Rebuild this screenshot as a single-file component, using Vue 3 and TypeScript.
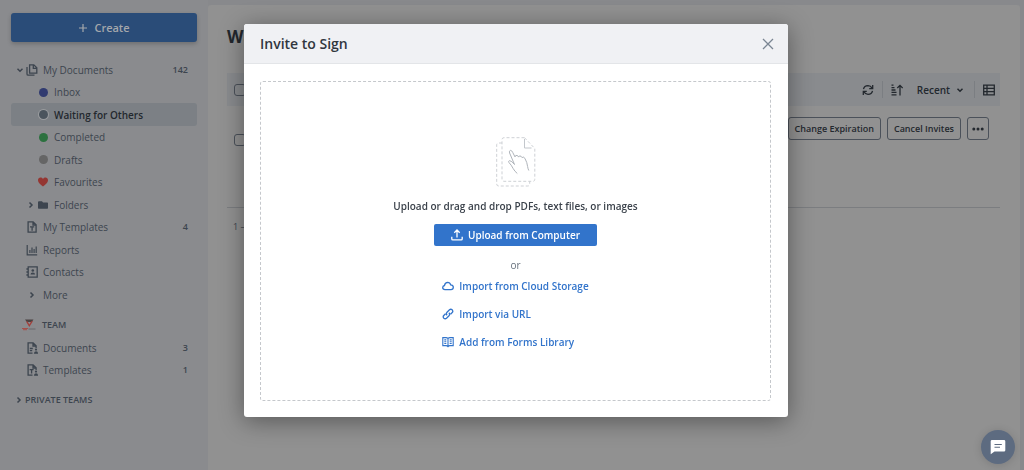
<script setup lang="ts">
import { ref } from 'vue'

interface NavItem {
  label: string
  kind: 'root' | 'child'
  icon?: string
  dot?: string
  chevron?: 'down' | 'right'
  count?: number
  active?: boolean
}

const navItems: NavItem[] = [
  { label: 'My Documents', kind: 'root', icon: 'copies', chevron: 'down', count: 142 },
  { label: 'Inbox', kind: 'child', dot: 'inbox' },
  { label: 'Waiting for Others', kind: 'child', dot: 'waiting', active: true },
  { label: 'Completed', kind: 'child', dot: 'completed' },
  { label: 'Drafts', kind: 'child', dot: 'drafts' },
  { label: 'Favourites', kind: 'child', icon: 'heart' },
  { label: 'Folders', kind: 'child', icon: 'folder', chevron: 'right' },
  { label: 'My Templates', kind: 'root', icon: 'template', count: 4 },
  { label: 'Reports', kind: 'root', icon: 'chart' },
  { label: 'Contacts', kind: 'root', icon: 'contacts' },
  { label: 'More', kind: 'root', icon: 'chevron-right' },
]

const teamItems: NavItem[] = [
  { label: 'Documents', kind: 'root', icon: 'team-doc', count: 3 },
  { label: 'Templates', kind: 'root', icon: 'team-template', count: 1 },
]

const importLinks = [
  { label: 'Import from Cloud Storage', icon: 'cloud' },
  { label: 'Import via URL', icon: 'link' },
  { label: 'Add from Forms Library', icon: 'book' },
]

const open = ref(true)
</script>

<template>
  <svg class="sprite" aria-hidden="true">
    <symbol id="chevron-right" viewBox="0 0 12 12"><path d="M4.5 3.5 7 6 4.5 8.5" fill="none" stroke="currentColor" stroke-width="1.5" /></symbol>
    <symbol id="chevron-down" viewBox="0 0 12 12"><path d="M3.5 4.8 6 7.2 8.500 4.8" fill="none" stroke="currentColor" stroke-width="1.5" /></symbol>
    <symbol id="copies" viewBox="0 0 12 12"><path d="M3.600.8h4.200l3 3v5.400H3.600zM7.300 1v3.300h3.300M1 3v7q0 1.200 1.200 1.200H8.500" fill="none" stroke="currentColor" stroke-width="1.300" /></symbol>
    <symbol id="heart" viewBox="0 0 12 12"><path d="M6 10.500C3.400 8.500 1 6.400 1 4.200 1 1.200 4.400.7 6 2.900 7.600.7 11 1.200 11 4.200c0 2.200-2.400 4.300-5 6.300z" fill="currentColor" /></symbol>
    <symbol id="folder" viewBox="0 0 12 12"><path d="M2 2.300h3l1 1.200h4.300q.7 0 .7.700v4.800q0 .7-.7.700H1.700Q1 9.700 1 9V3.300q0-1 1-1z" fill="currentColor" /></symbol>
    <symbol id="template" viewBox="0 0 12 12"><path d="M2.100.8h5l3 3v7.400h-8zM7 1v3h3" fill="none" stroke="currentColor" stroke-width="1.300" /><path d="M4 5.800h4.200M6.100 5.800v4" stroke="currentColor" stroke-width="1.300" /></symbol>
    <symbol id="chart" viewBox="0 0 12 12"><path d="M1.200 1v9.900h10M3.900 9V6M6 9V3.500M8.100 9V5M10.200 9V2.500" fill="none" stroke="currentColor" stroke-width="1.200" /></symbol>
    <symbol id="contacts" viewBox="0 0 12 12"><path d="M2.200.9h9v10.200h-9zM.4 3h2.400M.4 6h2.400M.4 9h2.400" fill="none" stroke="currentColor" stroke-width="1.300" /><circle cx="6.800" cy="4.500" r="1.300" fill="currentColor" /><path d="M4.500 8.600q0-2 2.300-2t2.300 2z" fill="currentColor" /></symbol>
    <symbol id="team-doc" viewBox="0 0 12 12"><path d="M6.500 11.200H2.100V.8h5l3 3V6M7 1v3h3M3.800 6.500h3M3.800 8.600h2.400" fill="none" stroke="currentColor" stroke-width="1.300" /><circle cx="10" cy="7.600" r="1.100" fill="currentColor" /><path d="M7.900 11.700q0-2.500 2.100-2.500t2 2.500z" fill="currentColor" /></symbol>
    <symbol id="team-template" viewBox="0 0 12 12"><path d="M6.500 11.200H2.100V.8h5l3 3V6M7 1v3h3M3.600 5.700h4M5.600 5.700v3.800" fill="none" stroke="currentColor" stroke-width="1.300" /><circle cx="10" cy="7.600" r="1.100" fill="currentColor" /><path d="M7.900 11.700q0-2.500 2.100-2.500t2 2.500z" fill="currentColor" /></symbol>
    <symbol id="cloud" viewBox="0 0 12 12"><path d="M3 9.600q-2.300 0-2.300-2 0-1.700 1.800-2.100Q3 2.500 5.700 2.400q2.300 0 3 2.500 2.600.3 2.600 2.400 0 2.300-2.300 2.300z" fill="none" stroke="currentColor" stroke-width="1.300" /></symbol>
    <symbol id="link" viewBox="0 0 12 12"><path d="M5.100 7.300Q3.700 5.700 5 4.300l2.500-2.500q1.300-1.200 2.700 0 1.200 1.400 0 2.700L8.500 6.200M6.900 4.700q1.400 1.600.1 3l-2.500 2.500q-1.300 1.200-2.700 0-1.200-1.400 0-2.700l1.700-1.700" fill="none" stroke="currentColor" stroke-width="1.300" /></symbol>
    <symbol id="book" viewBox="0 0 12 12"><path d="M6 2.500Q5.300 1.600 4 1.600H.8v8H4q1.300 0 2 1 .7-1 2-1h3.200v-8H8q-1.300 0-2 .9zM6 2.500v8M2.300 3.900h2M2.300 5.700h2M2.300 7.500h2M7.700 3.900h2M7.700 5.700h2M7.700 7.500h2" fill="none" stroke="currentColor" stroke-width="1.100" /></symbol>
  </svg>

  <div class="app">
    <nav class="sidebar" aria-label="Main">
      <button class="create" type="button">
        <svg viewBox="0 0 10 10" aria-hidden="true"><path d="M5 1v8M1 5h8" stroke="currentColor" stroke-width="1.200" /></svg>
        Create
      </button>
      <ul class="nav">
        <li v-for="item in navItems" :key="item.label" :class="[item.kind, { active: item.active }]">
          <a href="#">
            <span class="toggle"><svg v-if="item.chevron"><use :href="'#chevron-' + item.chevron" /></svg></span>
            <span v-if="item.dot" class="icon"><i class="dot" :class="item.dot"></i></span>
            <svg v-else class="icon" :class="item.icon"><use :href="'#' + item.icon" /></svg>
            <span class="label">{{ item.label }}</span>
            <span v-if="item.count" class="count">{{ item.count }}</span>
          </a>
        </li>
      </ul>
      <h2 class="team">
        <svg viewBox="0 0 14 12" aria-hidden="true">
          <path d="M3 .5h8.500L9.700 3H4.800z" fill="#4b4342" />
          <path d="M4 2.500 7.300 8l3.700-6-2 .5-1.700 3-1.600-3z" fill="#a33f3b" />
          <path d="M0 9.500h6M1 10.700h4" stroke="#a5504b" />
          <path d="M6.500 10h7" stroke="#68696c" />
        </svg>
        TEAM
      </h2>
      <ul class="nav team-nav">
        <li v-for="item in teamItems" :key="item.label" :class="item.kind">
          <a href="#">
            <span class="toggle"></span>
            <svg class="icon"><use :href="'#' + item.icon" /></svg>
            <span class="label">{{ item.label }}</span>
            <span class="count">{{ item.count }}</span>
          </a>
        </li>
      </ul>
      <h2 class="private"><svg aria-hidden="true"><use href="#chevron-right" /></svg>PRIVATE TEAMS</h2>
    </nav>

    <main class="content">
      <h1>Waiting for Others</h1>
      <div class="toolbar">
        <input type="checkbox" aria-label="Select all" />
        <div class="tools">
          <button type="button" aria-label="Refresh">
            <svg viewBox="0 0 12 12"><path d="M1.500 5.200Q2.200 1.800 6 1.700q2.600 0 4.300 2.600M10.700 1v3.600H7.200M10.500 6.800Q9.800 10.200 6 10.300q-2.600 0-4.300-2.600M1.300 11V7.400h3.500" fill="none" stroke="currentColor" stroke-width="1.300" /></svg>
          </button>
          <i class="rule"></i>
          <button type="button" aria-label="Sort direction">
            <svg viewBox="0 0 12 12"><path d="M.5 1.200h2M.5 3.600h3M.5 6h4M.5 8.400h5M.5 10.800h5M9 11.500V1.500M6.300 4 9 1.300 11.700 4" fill="none" stroke="currentColor" stroke-width="1.300" /></svg>
          </button>
          <button class="recent" type="button">Recent <svg><use href="#chevron-down" /></svg></button>
          <i class="rule"></i>
          <button type="button" aria-label="Table view">
            <svg viewBox="0 0 12 12"><path d="M.7 1.200h10.600v9.600H.7zM.7 4.400h10.600M.7 7.600h10.600M4 1.200v9.600" fill="none" stroke="currentColor" stroke-width="1.300" /></svg>
          </button>
        </div>
      </div>
      <div class="row">
        <input type="checkbox" aria-label="Select document" />
        <div class="actions">
          <button type="button">Change Expiration</button>
          <button type="button">Cancel Invites</button>
          <button class="more" type="button" aria-label="More actions">
            <svg viewBox="0 0 12 12"><circle cx="1.800" cy="6" r="1.500" /><circle cx="6" cy="6" r="1.500" /><circle cx="10.200" cy="6" r="1.500" /></svg>
          </button>
        </div>
      </div>
      <p class="pages">1 –</p>
    </main>
  </div>

  <div v-if="open" class="overlay">
    <section class="dialog" role="dialog" aria-modal="true" aria-labelledby="dialog-title">
      <header>
        <h2 id="dialog-title">Invite to Sign</h2>
        <button type="button" aria-label="Close" @click="open = false">
          <svg viewBox="0 0 12 12"><path d="m1 1 10 10M11 1 1 11" stroke="currentColor" stroke-width="1.300" /></svg>
        </button>
      </header>
      <div class="dropzone">
        <svg class="pages-art" viewBox="0 0 40 50" aria-hidden="true">
          <g fill="none" stroke="#ced1d5" stroke-width="1" stroke-dasharray="3 2">
            <path d="M28.500.7H8Q6 .7 6 2.700v39.600q0 2 2 2h28.800q2 0 2-2V11.500M28.500.7l10.300 10.800M6 6H2.700Q.7 6 .7 8v39q0 2 2 2h29q2 0 2-2v-2.700" />
          </g>
          <path d="M28.500 2v9h7" fill="none" stroke="#c3c7cc" />
          <path d="M21.300 36.500q-2.500-2-4.300-5.200-1.600-3.300-4-5.700-1-1.600.5-2 2.200.2 5 3.900L13.600 16q-.7-2.300.8-2.600 1.300-.2 2.300 2l2.300 4.500q.3-2.300 2.600-1.300l1 1.500q.5-2 2.500-.8l1 1.400q.8-1.800 2.800.6 2.400 4.500 2.700 8.200.4 2.500 1.200 4" fill="none" stroke="#afb4ba" stroke-width="1" />
        </svg>
        <p class="prompt">Upload or drag and drop PDFs, text files, or images</p>
        <button class="upload" type="button">
          <svg viewBox="0 0 12 12" aria-hidden="true"><path d="M6 8.500V1.200M3.300 3.700 6 1l2.700 2.700M.8 7.700v2.200q0 1 1 1h8.400q1 0 1-1V7.700" fill="none" stroke="currentColor" stroke-width="1.300" /></svg>
          Upload from Computer
        </button>
        <p class="or">or</p>
        <ul class="imports">
          <li v-for="item in importLinks" :key="item.label">
            <a href="#"><svg aria-hidden="true"><use :href="'#' + item.icon" /></svg>{{ item.label }}</a>
          </li>
        </ul>
      </div>
    </section>
  </div>

  <button class="chat" type="button" aria-label="Open chat">
    <svg viewBox="0 0 16 16"><path d="M2 1h12q1.300 0 1.300 1.300v8.900q0 1.300-1.300 1.300H4.500L.7 15.300v-13Q.7 1 2 1z" fill="#fff" /><path d="M4.500 5.500h7.300M4.500 8.200h5.500" stroke="#5d6b80" stroke-width="1.100" /></svg>
  </button>
</template>

<style>
body {
  margin: 0;
  background: #88898c;
}
</style>

<style scoped>
* {
  box-sizing: border-box;
}
.sprite {
  position: absolute;
  width: 0;
  height: 0;
}
.app,
.overlay {
  font: 10px/16px "Open Sans", "Noto Sans", sans-serif;
}
.app {
  display: grid;
  grid-template-columns: 208px 1fr;
  min-height: 100vh;
  padding-right: 4px;
  color: #3d454f;
}
h1,
h2,
p,
ul {
  margin: 0;
  padding: 0;
}
ul {
  list-style: none;
}
button {
  font: inherit;
  font-weight: 600;
  color: inherit;
  padding: 0;
  border: 0;
  background: none;
}
a {
  color: inherit;
  text-decoration: none;
}
svg {
  display: block;
  flex: none;
  width: 12px;
  height: 12px;
}
.sidebar {
  padding: 13px 11px 0;
  background: #8a8b8e;
}
.create {
  display: flex;
  align-items: center;
  justify-content: center;
  gap: 6px;
  width: 100%;
  height: 29px;
  margin-bottom: 16px;
  border-radius: 3px;
  font-size: 11px;
  color: #a5a8ac;
  background: #2a4c78;
  box-shadow: 0 2px 4px rgba(0, 0, 0, 0.2);
}
.create svg {
  width: 10px;
  height: 10px;
}
.nav {
  display: grid;
  grid-auto-rows: 23px 22px;
}
.nav a {
  display: flex;
  align-items: center;
  height: 100%;
  padding: 0 9px 0 3px;
  border-radius: 3px;
}
.child a {
  padding-left: 14px;
}
.toggle {
  width: 12px;
}
.icon {
  display: grid;
  place-items: center;
  width: 12px;
  height: 12px;
}
.label {
  flex: 1;
  margin-left: 5px;
}
.count {
  font-size: 9px;
  font-weight: 600;
}
.active a {
  font-weight: 600;
  color: #23282e;
  background: #7c8085;
}
.dot {
  width: 9px;
  height: 9px;
  border-radius: 50%;
}
.inbox {
  background: #313b70;
}
.waiting {
  background: #4b545d;
  box-shadow: 0 0 0 1px #999b9e;
}
.completed {
  background: #2c713f;
}
.drafts {
  background: #656565;
}
.heart {
  color: #943632;
}
.team,
.private {
  display: flex;
  align-items: center;
  height: 22px;
  font-size: 9px;
  font-weight: 600;
}
.team {
  gap: 6px;
  margin-top: 8px;
  padding-left: 11px;
}
.team svg {
  width: 14px;
}
.private {
  margin-top: 8px;
  padding-left: 2px;
}
.content {
  margin-top: 5px;
  padding: 20px 20px 0 19px;
  border-radius: 3px 3px 0 0;
  background: #919191;
}
h1 {
  font-size: 17px;
  line-height: 24px;
  color: #22272d;
}
.toolbar {
  display: flex;
  align-items: center;
  justify-content: space-between;
  height: 33px;
  margin-top: 24px;
  padding: 0 5px 0 7px;
  color: #23282e;
  background: #898b8e;
}
input {
  appearance: none;
  width: 12px;
  height: 12px;
  margin: 0;
  border: 1px solid #4b515a;
  border-radius: 3px;
}
.tools,
.actions,
.recent {
  display: flex;
  align-items: center;
}
.tools {
  gap: 8px;
}
.rule {
  width: 1px;
  height: 17px;
  background: #7b7e82;
}
.recent {
  gap: 4px;
  margin-left: 6px;
}
.row {
  display: flex;
  align-items: center;
  justify-content: space-between;
  height: 102px;
  padding: 0 11px 34px 7px;
  border-bottom: 1px solid #7b7d80;
}
.actions {
  align-self: flex-start;
  gap: 6px;
  margin-top: 11px;
  color: #23282e;
}
.actions button {
  height: 23px;
  padding: 0 6px;
  border: 1px solid #4b515a;
  border-radius: 3px;
  font-size: 9px;
}
.actions .more {
  padding: 0 4px;
}
.more svg {
  fill: currentColor;
}
.pages {
  padding: 11px 6px;
  font-size: 9px;
}
.overlay {
  position: fixed;
  inset: 0;
  padding: 24px 236px 0 244px;
  display: grid;
  place-items: start center;
}
.dialog {
  width: 100%;
  max-width: 545px;
  min-width: 420px;
  overflow: hidden;
  border-radius: 3px;
  background: #fff;
  box-shadow: 0 4px 24px rgba(0, 0, 0, 0.4);
}
.dialog header {
  display: flex;
  align-items: center;
  justify-content: space-between;
  height: 40px;
  padding: 0 14px 0 16px;
  border-bottom: 1px solid #e3e5e8;
  background: #f0f1f4;
}
.dialog h2 {
  font-size: 14px;
  line-height: 20px;
  font-weight: 600;
  color: #30363e;
}
.dialog header button {
  color: #7a8592;
}
.dropzone {
  display: flex;
  flex-direction: column;
  align-items: center;
  margin: 17px 17px 16px 16px;
  padding: 55px 16px 50px;
  border: 1px dashed #c5c8cc;
  border-radius: 3px;
}
.pages-art {
  width: 40px;
  height: 50px;
}
.prompt {
  margin-top: 11px;
  font-weight: 600;
  color: #3b424b;
}
.upload {
  display: flex;
  align-items: center;
  gap: 5px;
  height: 22px;
  margin-top: 10px;
  padding: 0 17px;
  border-radius: 2px;
  color: #fff;
  background: #3274cb;
}
.or {
  margin-top: 11px;
  color: #66707c;
}
.imports {
  display: grid;
  gap: 12px;
  margin-top: 5px;
}
.imports a {
  display: flex;
  align-items: center;
  gap: 5px;
  font-weight: 600;
  color: #3274cb;
}
.chat {
  position: fixed;
  right: 9px;
  bottom: 6px;
  display: grid;
  place-items: center;
  width: 34px;
  height: 34px;
  border-radius: 50%;
  background: #5d6b80;
  box-shadow: 0 1px 8px rgba(0, 0, 0, 0.15);
}
.chat svg {
  width: 16px;
  height: 16px;
}
</style>
